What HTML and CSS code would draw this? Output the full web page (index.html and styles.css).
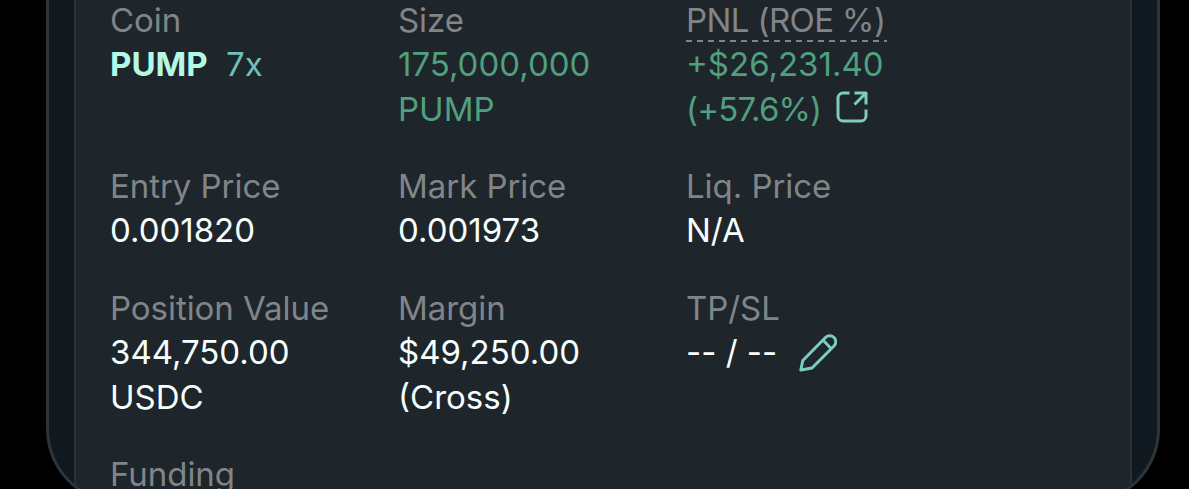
FILE: index.html
```html
<!DOCTYPE html>
<html lang="en">
<head>
  <meta charset="UTF-8">
  <meta name="viewport" content="width=device-width, initial-scale=1.0">
  <title>PUMP Position</title>
  <link rel="stylesheet" href="styles.css">
</head>
<body>
  <div class="phone">
    <div class="position-card">
      <div class="field">
        <div class="label">Coin</div>
        <div class="value coin"><b>PUMP</b> <span class="leverage">7x</span></div>
      </div>
      <div class="field">
        <div class="label">Size</div>
        <div class="value green">175,000,000<br>PUMP</div>
      </div>
      <div class="field">
        <div class="label"><span class="dashed">PNL (ROE %)</span></div>
        <div class="value green">+$26,231.40</div>
        <div class="value green with-icon">
          <span class="roe">(+57.6%)</span>
          <svg class="share-icon" width="32" height="32" viewBox="0 0 32 32">
            <path d="M13.500 2H7a5 5 0 0 0-5 5v18a5 5 0 0 0 5 5h18a5 5 0 0 0 5-5v-6.500M18.500 2H30v11.500M30 2L18.500 13.500"/>
          </svg>
        </div>
      </div>
      <div class="field">
        <div class="label">Entry Price</div>
        <div class="value">0.001820</div>
      </div>
      <div class="field">
        <div class="label">Mark Price</div>
        <div class="value">0.001973</div>
      </div>
      <div class="field">
        <div class="label">Liq. Price</div>
        <div class="value">N/A</div>
      </div>
      <div class="field">
        <div class="label">Position Value</div>
        <div class="value">344,750.00<br>USDC</div>
      </div>
      <div class="field">
        <div class="label">Margin</div>
        <div class="value">$49,250.00<br>(Cross)</div>
      </div>
      <div class="field">
        <div class="label">TP/SL</div>
        <div class="value with-icon">
          <span>-- / --</span>
          <svg class="edit-icon" width="38" height="38" viewBox="0 0 38 38">
            <path d="M1.800 36l2-9.500L26.500 3.500a6 6 0 0 1 8.500 8.500L13 34zM24 6l8 8.500"/>
          </svg>
        </div>
      </div>
      <div class="field">
        <div class="label">Funding</div>
      </div>
    </div>
  </div>
</body>
</html>
```

FILE: styles.css
```css
body {
  margin: 0;
  height: 489px;
  overflow: hidden;
  background: #000;
  color: #f6fefd;
  font-family: Inter, sans-serif;
  font-size: 33px;
  line-height: 44.4px;
}

.phone {
  box-sizing: border-box;
  width: 1114px;
  height: 504px;
  margin-left: 46px;
  padding: 0 25px;
  overflow: hidden;
  background: #111920;
  border: 3px solid #2d3539;
  border-top: none;
  border-radius: 0 0 75px 75px;
}

.position-card {
  box-sizing: border-box;
  display: grid;
  grid-template-columns: 288px 288px 1fr;
  grid-template-rows: 166px 122px 166px auto;
  height: 505px;
  margin-top: -2px;
  padding-left: 34px;
  background: #1e252b;
  border: solid #2a3238;
  border-width: 0 2px;
}

.field {
  white-space: nowrap;
}

.label {
  color: #818589;
  letter-spacing: -0.05px;
}

.green {
  color: #509f7e;
}

.coin b {
  color: #b3f9e4;
}

.leverage {
  margin-left: 9px;
  color: #6fc0b6;
}

.dashed {
  display: inline-block;
  width: 201px;
  letter-spacing: -0.6px;
  background: repeating-linear-gradient(90deg, #818589 0 6px, transparent 6px 11px) 0 42px / 100% 2px no-repeat;
}

.with-icon {
  display: flex;
  align-items: center;
}

.roe {
  letter-spacing: -0.85px;
}

svg {
  fill: none;
  stroke: #7bcdc2;
  stroke-width: 3;
  stroke-linejoin: round;
}

.share-icon {
  margin: -4px 0 0 15px;
}

.edit-icon {
  margin-left: 22px;
}
```
